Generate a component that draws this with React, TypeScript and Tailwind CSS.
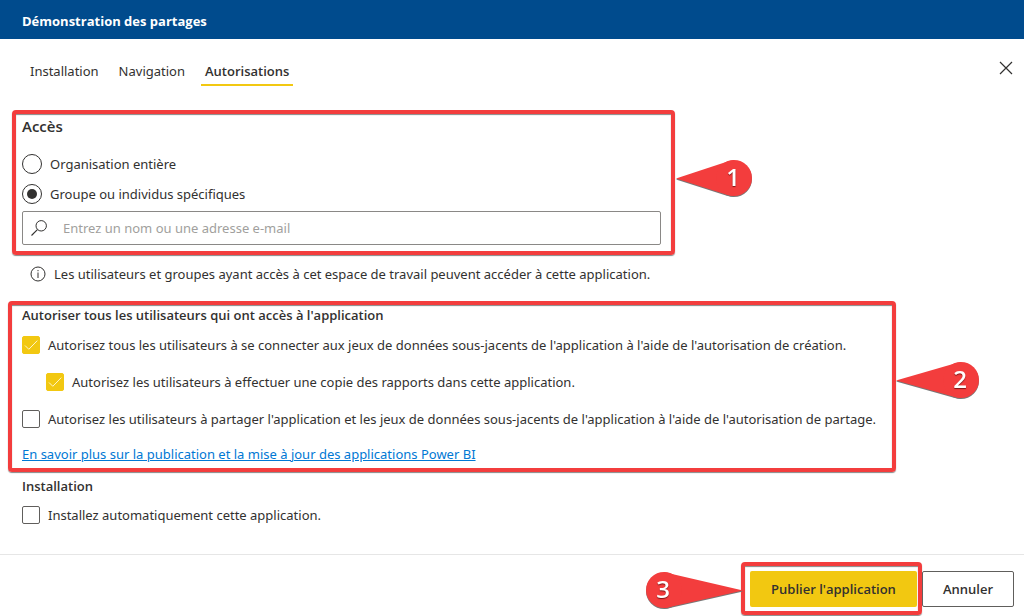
import { useState, type ReactNode } from 'react';

type CalloutProps = { label: string; className: string; side: 'left' | 'right'; reach: number };

function Callout({ label, className, side, reach }: CalloutProps) {
  const width = reach + 20;
  const cx = side === 'right' ? reach : 20;
  const tip = side === 'right' ? 0 : width;
  const edge = side === 'right' ? cx - 8 : cx + 8;
  return (
    <svg
      width={width}
      height={40}
      viewBox={`0 0 ${width} 40`}
      className={`pointer-events-none absolute drop-shadow-[0_1px_0_#777777] ${className}`}
      aria-hidden="true"
    >
      <path d={`M${tip} 19.5 L${edge} 3 L${cx} 1 L${cx} 37 L${edge} 35.5 Z`} fill="#f33d3d" />
      <circle cx={cx} cy={19} r={18} fill="#f33d3d" />
      <text
        x={cx - 1}
        y={27}
        textAnchor="middle"
        className="fill-white font-['Open_Sans'] text-[24px] font-semibold [text-shadow:0_1px_1px_#7a1515]"
      >
        {label}
      </text>
    </svg>
  );
}

function Highlight({ className, children }: { className: string; children: ReactNode }) {
  return (
    <div
      className={`pointer-events-none absolute rounded-[4px] border-4 border-[#f33d3d] shadow-[0_1px_1px_#888888,inset_0_1px_1px_#888888] ${className}`}
    >
      {children}
    </div>
  );
}

type OptionProps = { label: string; checked: boolean; onChange: () => void };

function Radio({ label, checked, onChange }: OptionProps) {
  return (
    <label className="flex h-[30px] items-center gap-2">
      <input
        type="radio"
        name="access"
        checked={checked}
        onChange={onChange}
        className="size-5 shrink-0 appearance-none rounded-full border border-[#323130] bg-white p-1 checked:bg-[#323130] checked:bg-clip-content"
      />
      {label}
    </label>
  );
}

function Checkbox({ label, checked, onChange }: OptionProps) {
  return (
    <label className="flex min-h-6 items-center gap-2">
      <span className="relative flex shrink-0">
        <input
          type="checkbox"
          checked={checked}
          onChange={onChange}
          className="size-[18px] appearance-none rounded-xs border border-[#605e5c] bg-white checked:border-[#f2c811] checked:bg-[#f2c811]"
        />
        {checked && (
          <svg className="pointer-events-none absolute inset-0" width="18" height="18" viewBox="0 0 18 18" aria-hidden="true">
            <path d="M3 9.5 L6.8 13.3 L15.3 4.6" fill="none" stroke="#fff6cc" strokeWidth="1" />
          </svg>
        )}
      </span>
      {label}
    </label>
  );
}

const tabs = ['Installation', 'Navigation', 'Autorisations'];

export default function App() {
  const [tab, setTab] = useState('Autorisations');
  const [access, setAccess] = useState('groups');
  const [build, setBuild] = useState(true);
  const [copy, setCopy] = useState(true);
  const [share, setShare] = useState(false);
  const [install, setInstall] = useState(false);

  return (
    <div className="flex min-h-screen flex-col bg-white font-['Noto_Sans','Open_Sans',sans-serif] text-[13px] leading-5 text-[#323130]">
      <header className="flex h-[39px] items-center bg-[#004b8d] px-[22px] pt-0.5">
        <h1 className="font-['Open_Sans'] text-[13px] font-bold text-white">Démonstration des partages</h1>
      </header>

      <div className="flex items-start justify-between pt-[19px] pr-2 pl-[26px]">
        <nav className="flex gap-3">
          {tabs.map((name) => (
            <button
              key={name}
              type="button"
              onClick={() => setTab(name)}
              className={`h-7 border-b-2 px-1 ${
                tab === name ? "border-[#f2c811] font-['Open_Sans'] font-semibold" : 'border-transparent'
              }`}
            >
              {name}
            </button>
          ))}
        </nav>
        <button type="button" aria-label="Fermer" className="flex size-5 items-center justify-center">
          <svg width="14" height="14" viewBox="0 0 14 14" aria-hidden="true">
            <path d="M1 1 L13 13 M13 1 L1 13" stroke="#323130" strokeWidth="1.2" />
          </svg>
        </button>
      </div>

      <main className="flex-1 px-[22px] pt-7 pb-[27px]">
        <section className="relative max-w-[639px]">
          <h2 className="mb-[11px] font-['Open_Sans'] text-[15px] leading-6 font-semibold">Accès</h2>
          <Radio label="Organisation entière" checked={access === 'all'} onChange={() => setAccess('all')} />
          <Radio
            label="Groupe ou individus spécifiques"
            checked={access === 'groups'}
            onChange={() => setAccess('groups')}
          />
          <label className="mt-0.5 flex h-[34px] items-center gap-4 rounded-xs border border-[#8a8886] pl-2">
            <svg width="16" height="16" viewBox="0 0 16 16" className="shrink-0" aria-hidden="true">
              <circle cx="10.2" cy="5.8" r="5.2" fill="none" stroke="#323130" strokeWidth="1" />
              <path d="M6.4 9.6 L0.5 15.5" stroke="#323130" strokeWidth="1.1" />
            </svg>
            <input
              type="text"
              aria-label="Nom ou adresse e-mail"
              placeholder="Entrez un nom ou une adresse e-mail"
              className="h-full min-w-0 flex-1 outline-none placeholder:text-[#a19f9d]"
            />
          </label>
          <Highlight className="-top-1 -right-[14px] -bottom-[10px] -left-[10px]">
            <Callout label="1" side="right" reach={58} className="top-[45px] left-[calc(100%+5px)]" />
          </Highlight>
        </section>

        <p className="mt-[19px] flex items-center gap-2 pl-2">
          <svg width="16" height="16" viewBox="0 0 16 16" className="shrink-0" aria-hidden="true">
            <circle cx="8" cy="8" r="7" fill="none" stroke="#323130" strokeWidth="1" />
            <path d="M8 6.5 V12 M8 4 V5.2" stroke="#323130" strokeWidth="1" />
          </svg>
          Les utilisateurs et groupes ayant accès à cet espace de travail peuvent accéder à cette application.
        </p>

        <section className="relative mt-[21px] max-w-[864px]">
          <h2 className="font-['Open_Sans'] font-semibold">Autoriser tous les utilisateurs qui ont accès à l'application</h2>
          <div className="mt-2 flex flex-col gap-[13px]">
            <Checkbox
              label="Autorisez tous les utilisateurs à se connecter aux jeux de données sous-jacents de l'application à l'aide de l'autorisation de création."
              checked={build}
              onChange={() => setBuild(!build)}
            />
            <div className="pl-6">
              <Checkbox
                label="Autorisez les utilisateurs à effectuer une copie des rapports dans cette application."
                checked={copy}
                onChange={() => setCopy(!copy)}
              />
            </div>
            <Checkbox
              label="Autorisez les utilisateurs à partager l'application et les jeux de données sous-jacents de l'application à l'aide de l'autorisation de partage."
              checked={share}
              onChange={() => setShare(!share)}
            />
            <a href="#" className="self-start text-[#0078d4] underline">
              En savoir plus sur la publication et la mise à jour des applications Power BI
            </a>
          </div>
          <Highlight className="-top-1 -right-[10px] -bottom-2 -left-[14px]">
            <Callout label="2" side="right" reach={65} className="top-[56px] left-[calc(100%+4px)]" />
          </Highlight>
        </section>

        <section className="mt-3">
          <h2 className="mb-[7px] font-['Open_Sans'] font-semibold">Installation</h2>
          <Checkbox
            label="Installez automatiquement cette application."
            checked={install}
            onChange={() => setInstall(!install)}
          />
        </section>
      </main>

      <footer className="flex justify-end gap-[5px] border-t border-[#e6e6e6] pt-4 pr-[10px] pb-[9px] font-['Open_Sans']">
        <div className="relative">
          <button type="button" className="h-9 rounded-xs bg-[#f2c811] px-[21px] font-semibold">
            Publier l'application
          </button>
          <Highlight className="-top-[9px] -right-[5px] -bottom-2 -left-[9px]">
            <Callout label="3" side="left" reach={79} className="top-[5px] right-[calc(100%+2px)]" />
          </Highlight>
        </div>
        <button type="button" className="h-9 rounded-xs border border-[#605e5c] px-5 font-semibold">
          Annuler
        </button>
      </footer>
    </div>
  );
}
